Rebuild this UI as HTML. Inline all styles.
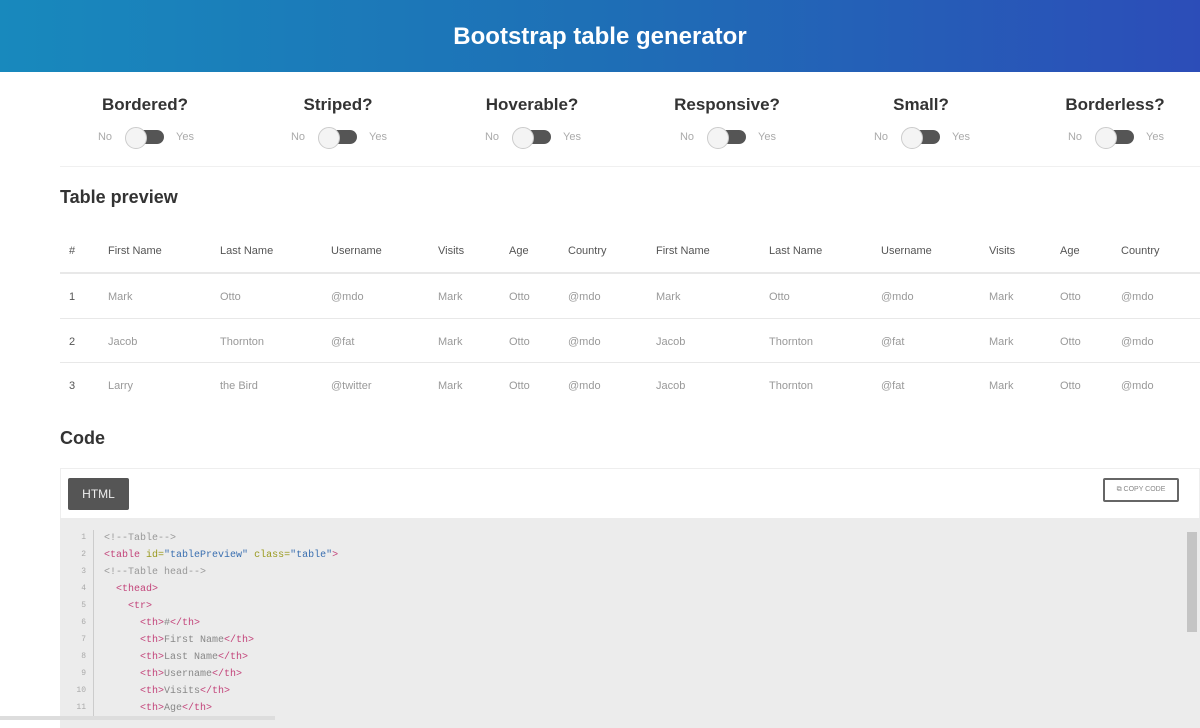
<!DOCTYPE html>
<html><head><style>
*{margin:0;padding:0;box-sizing:border-box}
body{width:1200px;height:720px;overflow:hidden;background:#fff;font-family:"Liberation Sans",sans-serif;position:relative}
.hd{position:absolute;left:0;top:0;width:1200px;height:72px;background:linear-gradient(90deg,#1889bd,#1e6fb6 50%,#2c4db8);color:#fff;font-weight:bold;font-size:24px;text-align:center;line-height:74px}
.a{position:absolute;white-space:nowrap}
.t{font-weight:bold;font-size:17px;color:#333;transform:translateX(-50%)}
.tg{transform:translateX(-50%);font-size:11px;color:#aaa;display:flex;align-items:center;gap:12px}
.sw{width:36px;height:14px;border-radius:7px;background:#555;position:relative;margin-left:4px}
.sw:before{content:"";position:absolute;left:-3px;top:-3px;width:20px;height:20px;border-radius:50%;background:#f4f4f4;border:1px solid #ccc}
.h2{font-weight:bold;font-size:18px;color:#333}
.th{font-size:11px;color:#555}
.td{font-size:11px;color:#999}
.ln{position:absolute;left:60px;width:1140px;height:1px;background:#e8e8e8}
.code{font-family:"Liberation Mono",monospace;font-size:10px;color:#888}
.tag{color:#c3447a}.at{color:#9a9a20}.st{color:#3a6fb0}.cm{color:#999}
</style></head><body>
<div class="hd">Bootstrap table generator</div>
<div class="ln" style="top:166px;background:#f0f0f0"></div>
<div id="tg"></div>
<div class="a h2" style="left:60px;top:187px">Table preview</div>
<div class="ln" style="top:272px;height:2px"></div>
<div class="ln" style="top:318px"></div>
<div class="ln" style="top:362px"></div>
<div id="tb"></div>
<div class="a h2" style="left:60px;top:428px">Code</div>
<div class="a" style="left:60px;top:468px;width:1140px;height:260px;border:1px solid #eee;background:#fff"></div>
<div class="a" style="left:60px;top:518px;width:1140px;height:210px;background:#ececec"></div>
<div class="a" style="left:68px;top:478px;width:61px;height:32px;background:#555;color:#eee;font-size:12px;line-height:32px;text-align:center;border-radius:2px">HTML</div>
<div class="a" style="left:1103px;top:478px;width:76px;height:24px;border:2px solid #666;border-radius:2px;font-size:7px;color:#888;line-height:20px;text-align:center">⧉ COPY CODE</div>
<div class="a" style="left:1187px;top:532px;width:10px;height:100px;background:#c4c4c4"></div>
<div class="a" style="left:93px;top:530px;width:1px;height:190px;background:#ccc"></div>
<div id="cd"></div>
<div class="a" style="left:0;top:716px;width:275px;height:4px;background:#ddd"></div>
<script>
var g=document.getElementById('tg'),h='';
[['Bordered?',145],['Striped?',338],['Hoverable?',532],['Responsive?',727],['Small?',921],['Borderless?',1115]].forEach(function(x){
h+='<div class="a t" style="left:'+x[1]+'px;top:95px">'+x[0]+'</div><div class="a tg" style="left:'+(x[1]+1)+'px;top:130px">No<div class="sw"></div>Yes</div>';});
g.innerHTML=h;
var xs=[69,108,220,331,438,509,568,656,769,881,989,1060,1121];
var hdr=['#','First Name','Last Name','Username','Visits','Age','Country','First Name','Last Name','Username','Visits','Age','Country'];
var rows=[['1','Mark','Otto','@mdo','Mark','Otto','@mdo','Mark','Otto','@mdo','Mark','Otto','@mdo'],['2','Jacob','Thornton','@fat','Mark','Otto','@mdo','Jacob','Thornton','@fat','Mark','Otto','@mdo'],['3','Larry','the Bird','@twitter','Mark','Otto','@mdo','Jacob','Thornton','@fat','Mark','Otto','@mdo']];
h='';xs.forEach(function(x,i){h+='<div class="a th" style="left:'+x+'px;top:245px">'+hdr[i]+'</div>';
rows.forEach(function(r,j){h+='<div class="a td" style="left:'+x+'px;top:'+(291+j*44.5)+'px;'+(i==0?'color:#555':'')+'">'+r[i]+'</div>';});});
document.getElementById('tb').innerHTML=h;
var L=['<span class="cm">&lt;!--Table--&gt;</span>','<span class="tag">&lt;table</span> <span class="at">id=</span><span class="st">"tablePreview"</span> <span class="at">class=</span><span class="st">"table"</span><span class="tag">&gt;</span>','<span class="cm">&lt;!--Table head--&gt;</span>','  <span class="tag">&lt;thead&gt;</span>','    <span class="tag">&lt;tr&gt;</span>'];
['#','First Name','Last Name','Username','Visits','Age'].forEach(function(s){L.push('      <span class="tag">&lt;th&gt;</span>'+s+'<span class="tag">&lt;/th&gt;</span>');});
h='';L.forEach(function(s,i){h+='<div class="a code" style="left:70px;top:'+(533+i*17)+'px;width:16px;text-align:right;font-size:8px;color:#aaa">'+(i+1)+'</div><div class="a code" style="left:104px;top:'+(533+i*17)+'px;white-space:pre">'+s+'</div>';});
document.getElementById('cd').innerHTML=h;
</script>
</body></html>
